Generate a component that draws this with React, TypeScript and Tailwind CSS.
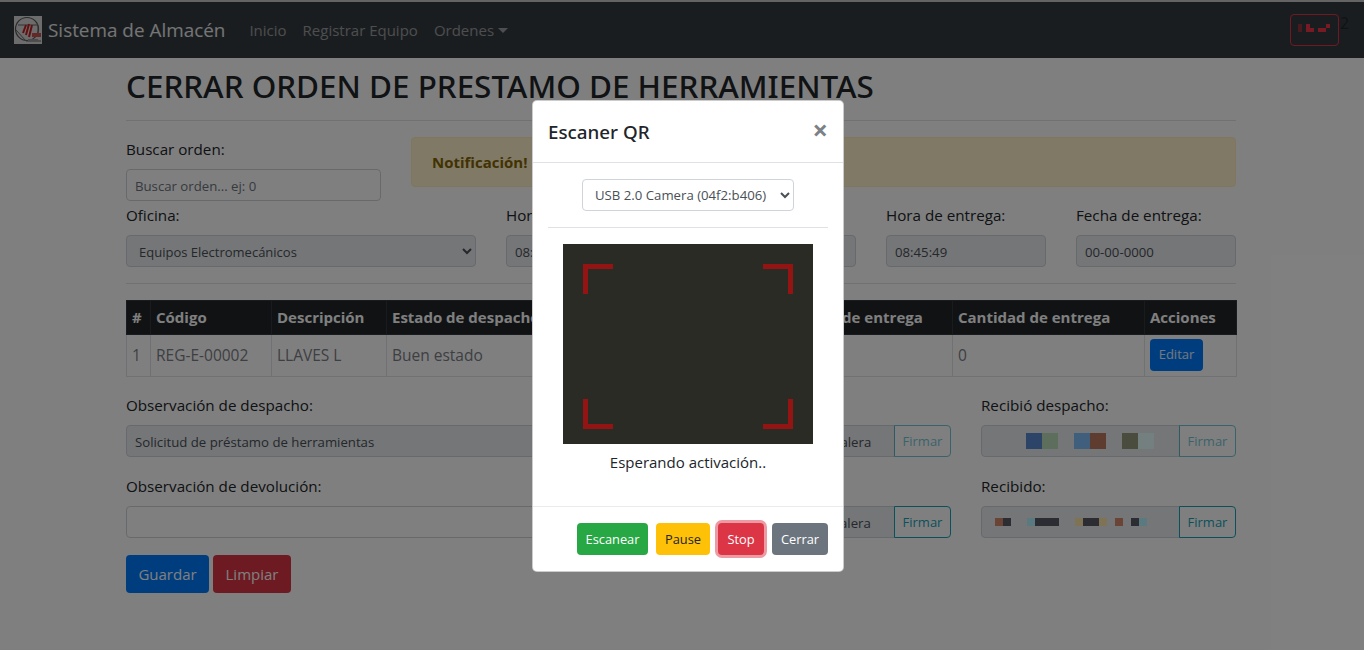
function Label({ children }: { children: React.ReactNode }) {
  return <label className="block text-[15.2px] leading-[24px] mb-2 text-[#212529]">{children}</label>;
}

function Field({ value, className = "" }: { value: string; className?: string }) {
  return (
    <input
      readOnly
      value={value}
      className={"block w-full h-[32px] px-[8px] pt-[2px] text-[13.2px] text-[#495057] bg-[#e9ecef] border border-[#ced4da] rounded " + className}
    />
  );
}

function Firmar({ active }: { active?: boolean }) {
  return (
    <button className={"w-[57px] h-[32px] shrink-0 -ml-px pt-[1px] text-[13px] border border-[#17a2b8] rounded-r text-[#17a2b8] " + (active ? "" : "opacity-60")}>
      Firmar
    </button>
  );
}

function Blocks({ h, items }: { h: string; items: [number, string][] }) {
  return (
    <div className={"flex " + h}>
      {items.map(([w, c], i) => (
        <span key={i} className="block h-full" style={{ width: w, background: c }} />
      ))}
    </div>
  );
}

function Corner({ className }: { className: string }) {
  return <div className={"absolute w-[30px] h-[30px] border-[#941313] " + className} />;
}

function Logo() {
  return (
    <svg width="28" height="28" viewBox="0 0 28 28" className="shrink-0">
      <rect width="28" height="28" fill="#d8d8d8" />
      <circle cx="13" cy="13" r="11.5" fill="none" stroke="#555" strokeWidth="1.2" />
      <path d="M2 14 L12 25 H27 M4 9 H24 V20" fill="none" stroke="#666" strokeWidth="1" />
      <path d="M9 17 L12 9 M12 19 L15 8 M15 21 L18 9" stroke="#c81e1e" strokeWidth="2" />
      <rect x="18" y="17" width="9" height="4" fill="#c85050" />
      <rect x="14" y="23" width="10" height="2" fill="#999" />
    </svg>
  );
}

const heading = { fontFamily: '"Noto Sans", "Open Sans", sans-serif' };

export default function App() {
  return (
    <div className="relative h-[650px] overflow-hidden bg-white text-[#212529]" style={{ fontFamily: '"Open Sans", "Noto Sans", sans-serif' }}>
      <div className="h-[2px] bg-[#c8c8c8]" />
      <nav className="h-[56px] bg-[#343a40] flex items-center pl-[14px] pr-[15px]">
        <Logo />
        <span className="ml-[6px] pt-[1px] text-[18.9px] text-white/90">Sistema de Almacén</span>
        <div className="flex items-center gap-[16px] ml-[24px] pt-[1px] text-[15px] text-white/50">
          <span>Inicio</span>
          <span>Registrar Equipo</span>
          <span className="flex items-center gap-[4px]">
            Ordenes
            <span className="w-0 h-0 border-x-[5px] border-x-transparent border-t-[5px] border-t-white/50" />
          </span>
        </div>
        <div className="ml-auto flex items-center">
          <div className="w-[49px] h-[32px] border border-[#dc3545] rounded flex items-center pl-[7px]">
            <svg width="32" height="8" viewBox="0 0 32 8" className="-mt-[4px]">
              <rect x="0" y="0" width="4" height="8" fill="#94343c" />
              <rect x="8" y="0" width="4" height="8" fill="#f03448" />
              <rect x="12" y="4" width="4" height="4" fill="#f03448" />
              <rect x="20" y="4" width="4" height="4" fill="#f03448" />
              <rect x="24" y="4" width="4" height="4" fill="#f03448" />
              <rect x="28" y="0" width="4" height="4" fill="#f03448" />
            </svg>
          </div>
          <span className="ml-[1px] -mt-[15px] w-[9px] text-[16px] leading-none text-[#212529]">2</span>
        </div>
      </nav>

      <main className="ml-[126px] w-[1110px]">
        <h1 className="mt-[7px] text-[31.4px] leading-[42px] font-medium whitespace-nowrap" style={heading}>CERRAR ORDEN DE PRESTAMO DE HERRAMIENTAS</h1>
        <hr className="mt-[13px] border-[#dee2e6]" />

        <div className="flex gap-[30px] mt-[16px]">
          <div className="w-[255px]">
            <Label>Buscar orden:</Label>
            <input placeholder="Buscar orden... ej: 0" className="block w-full h-[32px] px-[8px] pt-[2px] text-[13.2px] border border-[#ced4da] rounded placeholder:text-[#6c757d]" />
          </div>
          <div className="flex-1 h-[50px] bg-[#fff3cd] border border-[#ffeeba] rounded px-[20px] flex items-center text-[#856404] font-bold text-[15px]">
            Notificación!
          </div>
        </div>

        <div className="flex gap-[30px] mt-[2px]">
          <div className="w-[350px]">
            <Label>Oficina:</Label>
            <select className="block w-full h-[32px] pl-[8px] pr-[3px] pt-[2px] text-[13px] text-[#495057] bg-[#e9ecef] border border-[#ced4da] rounded">
              <option>Equipos Electromecánicos</option>
            </select>
          </div>
          <div className="w-[160px]">
            <Label>Hora de despacho:</Label>
            <Field value="08:45:49" />
          </div>
          <div className="w-[160px]">
            <Label>Fecha de despacho:</Label>
            <Field value="00-00-0000" />
          </div>
          <div className="w-[160px]">
            <Label>Hora de entrega:</Label>
            <Field value="08:45:49" />
          </div>
          <div className="w-[160px]">
            <Label>Fecha de entrega:</Label>
            <Field value="00-00-0000" />
          </div>
        </div>

        <hr className="mt-[16px] border-[#dee2e6]" />

        <table className="mt-[16px] w-full table-fixed border-collapse text-[15.5px]">
          <colgroup>
            <col className="w-[24px]" />
            <col className="w-[121px]" />
            <col className="w-[115px]" />
            <col className="w-[167px]" />
            <col className="w-[229px]" />
            <col className="w-[170px]" />
            <col className="w-[192px]" />
            <col className="w-[92px]" />
          </colgroup>
          <thead>
            <tr className="h-[34px] bg-[#212529] text-white text-left">
              {["#", "Código", "Descripción", "Estado de despacho", "Cantidad de despacho", "Estado de entrega", "Cantidad de entrega", "Acciones"].map((t) => (
                <th key={t} className="px-[5px] font-bold text-[15px] border border-[#32383e] whitespace-nowrap overflow-hidden">{t}</th>
              ))}
            </tr>
          </thead>
          <tbody>
            <tr className="h-[42px] text-[#7a8085]">
              <td className="px-[5px] border border-[#dee2e6]">1</td>
              <td className="px-[5px] border border-[#dee2e6]">REG-E-00002</td>
              <td className="px-[5px] border border-[#dee2e6]">LLAVES L</td>
              <td className="px-[5px] border border-[#dee2e6]">Buen estado</td>
              <td className="px-[5px] border border-[#dee2e6]">1</td>
              <td className="px-[5px] border border-[#dee2e6]"></td>
              <td className="px-[5px] border border-[#dee2e6]">0</td>
              <td className="px-[5px] border border-[#dee2e6]">
                <button className="block w-[53px] h-[32px] mb-[1px] bg-[#007bff] text-white/90 text-[13px] rounded">Editar</button>
              </td>
            </tr>
          </tbody>
        </table>

        <div className="flex gap-[30px] mt-[16px]">
          <div className="w-[540px]">
            <Label>Observación de despacho:</Label>
            <Field value="Solicitud de préstamo de herramientas" />
          </div>
          <div className="w-[255px]">
            <Label>Entregó despacho:</Label>
            <div className="flex">
              <Field value="Wilmer Antonio J. Escalera" className="rounded-r-none pl-[14px]" />
              <Firmar />
            </div>
          </div>
          <div className="w-[255px]">
            <Label>Recibió despacho:</Label>
            <div className="flex">
              <div className="flex-1 h-[32px] bg-[#e9ecef] border border-[#ced4da] rounded-l pl-[44px] flex items-center">
                <Blocks h="h-[16px]" items={[[16, "#5688d0"], [16, "#bcdcb8"], [16, "transparent"], [16, "#7ebef8"], [16, "#bc7a60"], [16, "transparent"], [16, "#949a7a"], [16, "#e8ffff"]]} />
              </div>
              <Firmar />
            </div>
          </div>
        </div>

        <div className="flex gap-[30px] mt-[17px]">
          <div className="w-[540px]">
            <Label>Observación de devolución:</Label>
            <input className="block w-full h-[32px] border border-[#ced4da] rounded" />
          </div>
          <div className="w-[255px]">
            <Label>Entregó:</Label>
            <div className="flex">
              <Field value="Wilmer Antonio Escalera" className="rounded-r-none pl-[24px]" />
              <Firmar active />
            </div>
          </div>
          <div className="w-[255px]">
            <Label>Recibido:</Label>
            <div className="flex">
              <div className="flex-1 h-[32px] bg-[#e9ecef] border border-[#ced4da] rounded-l pl-[13px] flex items-center">
                <Blocks h="h-[8px]" items={[[8, "#d48a6a"], [8, "#565a66"], [16, "transparent"], [8, "#b4f4ff"], [24, "#565a66"], [16, "transparent"], [8, "#ffe6aa"], [16, "#565a66"], [8, "#ffe6aa"], [8, "transparent"], [8, "#d48a6a"], [8, "transparent"], [8, "#565a66"], [8, "#b4f4ff"]]} />
              </div>
              <Firmar active />
            </div>
          </div>
        </div>

        <div className="flex gap-[4px] mt-[17px]">
          <button className="w-[83px] h-[38px] bg-[#007bff] text-white text-[15px] rounded">Guardar</button>
          <button className="w-[78px] h-[38px] bg-[#dc3545] text-white text-[15px] rounded">Limpiar</button>
        </div>
      </main>

      <div className="absolute inset-0 bg-black/50" />

      <div className="absolute left-[532px] top-[100px] w-[312px] h-[472px] bg-white rounded-[5px] border border-black/20 flex flex-col">
        <div className="h-[62px] shrink-0 border-b border-[#dee2e6] flex items-center justify-between pl-[15px] pr-[15px]">
          <span className="pt-[2px] text-[18.8px] font-medium" style={heading}>Escaner QR</span>
          <span className="text-[27px] leading-none font-bold text-[#7b8186] -mt-[4px]">×</span>
        </div>
        <div className="flex-1 flex flex-col items-center px-[15px] pt-[16px]">
          <select className="w-[212px] h-[32px] pl-[8px] text-[13.2px] text-[#495057] bg-white border border-[#ced4da] rounded">
            <option>USB 2.0 Camera (04f2:b406)</option>
          </select>
          <hr className="self-stretch mt-[16px] border-[#dee2e6]" />
          <div className="relative mt-[16px] w-[250px] h-[200px] bg-[#2a2b25]">
            <Corner className="left-[20px] top-[20px] border-l-[5px] border-t-[5px]" />
            <Corner className="right-[20px] top-[20px] border-r-[5px] border-t-[5px]" />
            <Corner className="left-[20px] bottom-[15px] border-l-[5px] border-b-[5px]" />
            <Corner className="right-[20px] bottom-[15px] border-r-[5px] border-b-[5px]" />
          </div>
          <p className="mt-[8px] text-[15px] leading-[21px]">Esperando activación..</p>
        </div>
        <div className="h-[65px] shrink-0 border-t border-[#e9ecef] flex items-center justify-end gap-[8px] pr-[15px]">
          <button className="w-[71px] h-[32px] pt-[1px] bg-[#28a745] text-white text-[12.8px] rounded">Escanear</button>
          <button className="w-[54px] h-[32px] pt-[1px] bg-[#ffc107] text-[#212529] text-[12.8px] rounded">Pause</button>
          <button className="w-[46px] h-[32px] pt-[1px] bg-[#dc3545] text-white text-[12.8px] rounded ring-[3px] ring-[#dc3545]/50">Stop</button>
          <button className="w-[56px] h-[32px] pt-[1px] bg-[#6c757d] text-white text-[12.8px] rounded">Cerrar</button>
        </div>
      </div>
    </div>
  );
}
